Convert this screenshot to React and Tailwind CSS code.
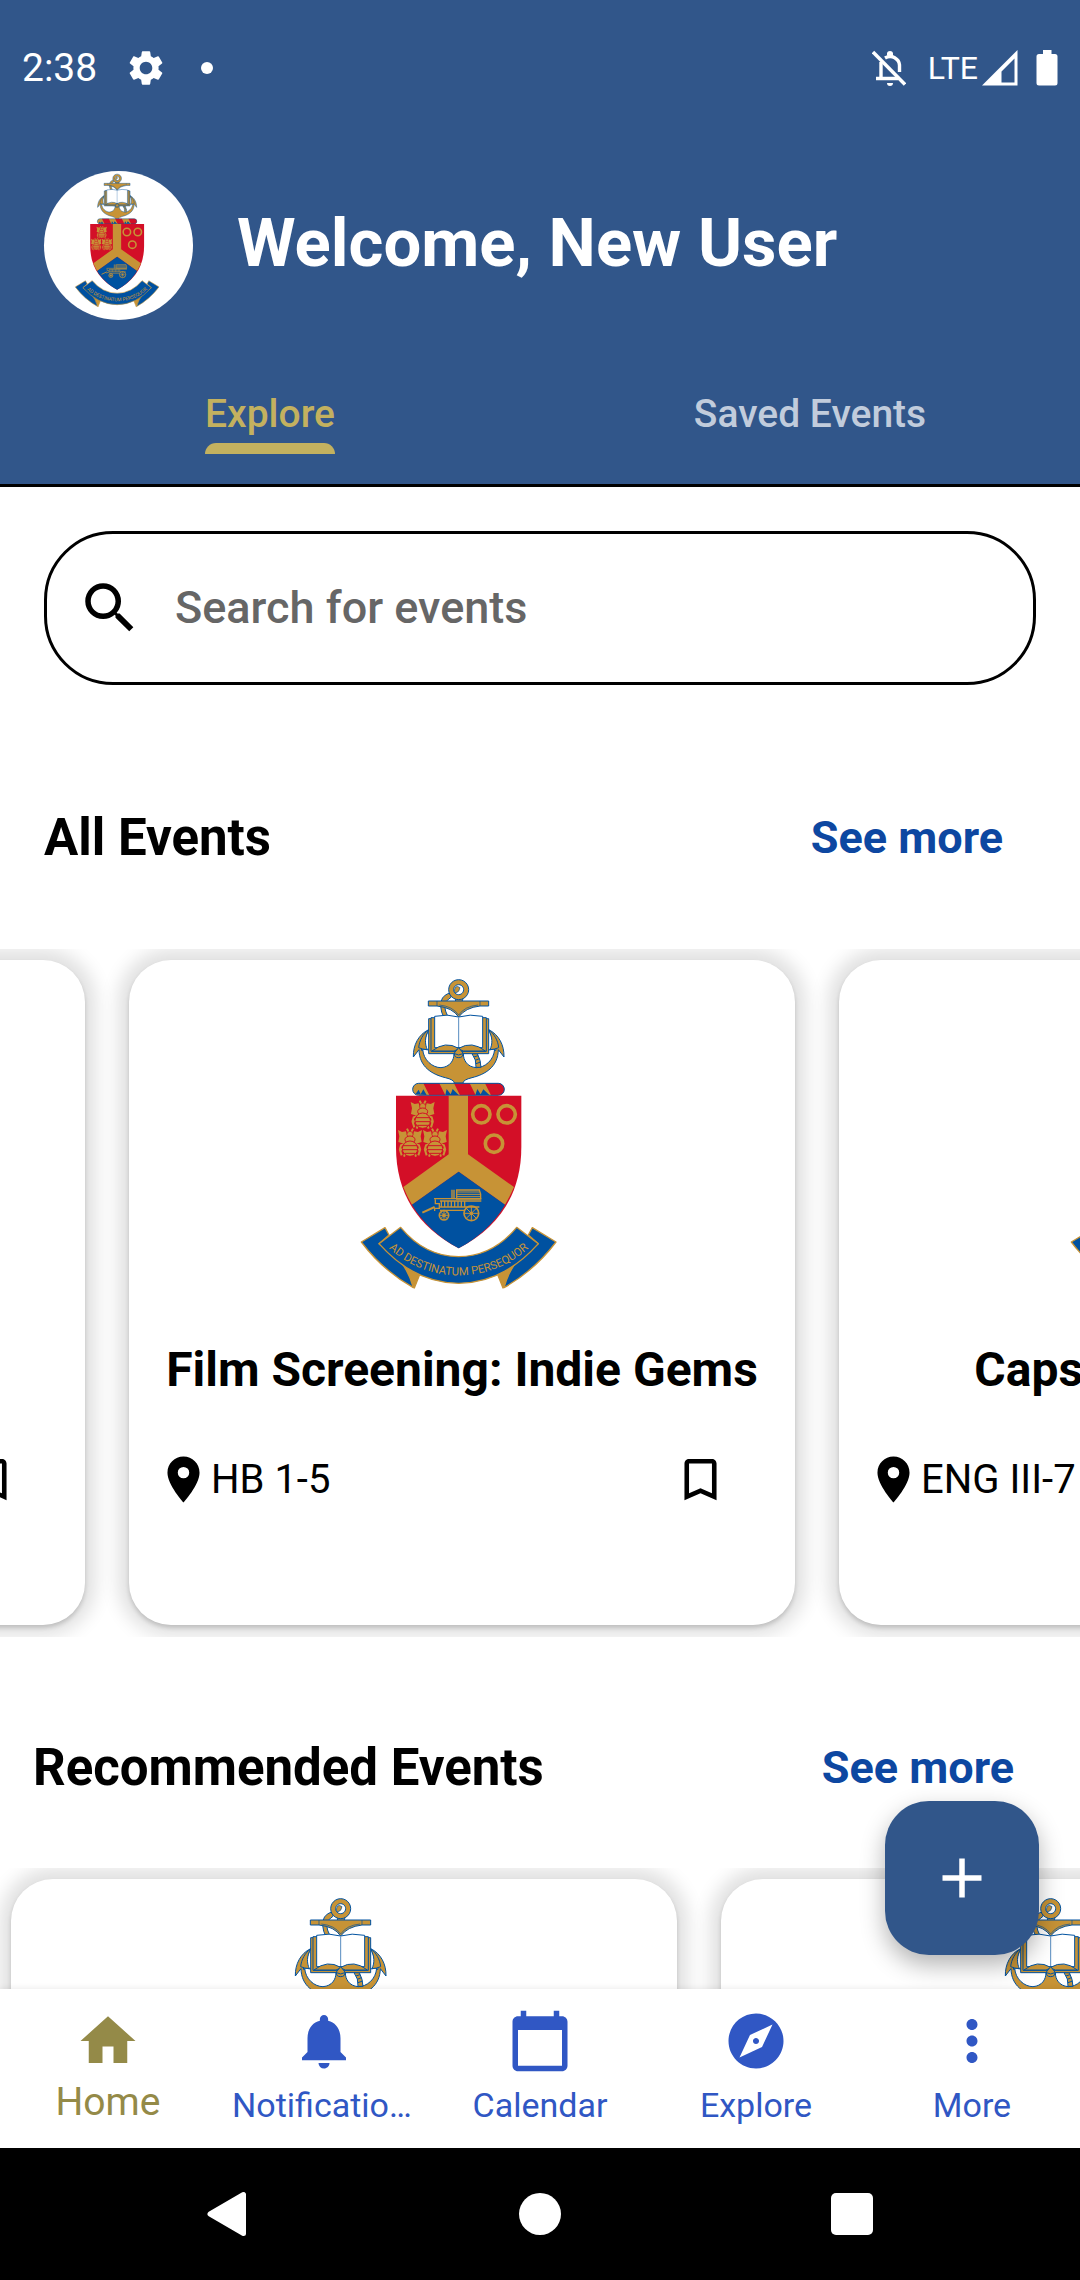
import { useId, useLayoutEffect, useRef } from "react";
import {
  MdSettings,
  MdSearch,
  MdLocationOn,
  MdBookmarkBorder,
  MdHome,
  MdNotifications,
  MdCalendarToday,
  MdExplore,
  MdMoreVert,
} from "react-icons/md";

const GOLD = "#c79336";
const BLUE = "#0051a0";
const RED = "#d30f27";

function Bee({ x, y }) {
  return (
    <g transform={`translate(${x} ${y})`} fill={GOLD}>
      <path d="M-36 -38 L-24 -32 L-12 -34 L-8 -18 L-5 -8 L-16 4 L-35 -2 L-32 -19Z" />
      <path d="M36 -38 L24 -32 L12 -34 L8 -18 L5 -8 L16 4 L35 -2 L32 -19Z" />
      <path
        d="M-3 -30 L-9 -42 M3 -30 L9 -42 M-14 4 L-27 8 L-31 22 M14 4 L27 8 L31 22 M-15 16 L-30 22 L-25 38 M15 16 L30 22 L25 38 M-13 28 L-18 42 M13 28 L18 42"
        stroke={GOLD}
        strokeWidth="6"
        fill="none"
      />
      <circle cy="-25" r="9" stroke={RED} strokeWidth="2" />
      <ellipse cy="-9" rx="15" ry="11" stroke={RED} strokeWidth="3" />
      <ellipse cy="18" rx="23" ry="23" stroke={RED} strokeWidth="3" />
      <path d="M-22 9 H22 M-22 21 H22 M-16 32 H16" stroke={RED} strokeWidth="3" />
    </g>
  );
}

function Wheel({ x, y, r }) {
  const d = r * 0.7;
  return (
    <g transform={`translate(${x} ${y})`} fill="none" stroke={GOLD} strokeWidth="3">
      <circle r={r} strokeWidth="5" />
      <circle r="4" fill={GOLD} />
      <path d={`M0 ${-r}V${r}M${-r} 0H${r}M${-d} ${-d}L${d} ${d}M${-d} ${d}L${d} ${-d}`} />
    </g>
  );
}

function Crest({ className }) {
  const arc = useId();
  return (
    <svg viewBox="50 50 634 942" className={className} role="img" aria-label="University crest">
      <g stroke={BLUE} strokeWidth="3" strokeLinejoin="round" fill={GOLD}>
        <path d="M330 98 Q302 108 304 138 Q305 156 314 172 H327 Q316 150 316 136 Q318 120 336 110Z" />
        <path d="M345 112 Q354 122 343 136 H373 Q364 122 372 112Z" />
        <path
          fillRule="evenodd"
          d="M358 58 a30 30 0 1 0 .1 0Z M358 73 a15 15 0 1 1 -.1 0Z"
        />
        <path d="M354 78 a10 12 0 0 0 -6 20 q12 -2 14 -16Z" strokeWidth="2" />
        <path d="M267 122 H448 V137 H422 Q378 142 358 170 Q340 142 293 137 H267Z" />
        <path d="M293 122 V137 M422 122 V137 M300 134 Q340 138 358 164 Q376 138 416 134" fill="none" strokeWidth="2" />
        <path d="M268 208 C238 222 221 254 222 290 L239 268 C240 320 278 342 318 352 Q344 358 345 368 H371 Q372 358 398 352 C438 342 476 320 477 268 L494 290 C495 254 478 222 448 208 C462 240 468 256 470 270 H246 C248 256 254 240 268 208Z" />
        <path d="M250 266 C252 300 280 322 305 322 C332 320 344 300 344 280 L262 268Z" fill="#fff" />
        <path d="M466 266 C464 300 436 322 411 322 C384 320 372 300 372 280 L454 268Z" fill="#fff" />
        <path d="M268 208 C256 232 256 250 264 268 L250 266 L238 262 C240 240 252 220 268 208Z" />
        <path d="M448 208 C460 232 460 250 452 268 L466 266 L478 262 C476 240 464 220 448 208Z" />
        <path d="M398 280 Q412 298 410 321 H425 Q424 298 414 280Z" />
        <path d="M404 290 L416 286 M408 300 L420 295 M410 310 L424 305" />
        <path d="M268 175 H448 V280 H268Z" />
        <path d="M275 172 H441 V273 H275Z" />
        <path d="M286 168 Q325 160 358 170 Q391 160 430 168 V262 H286Z" fill="#fff" />
        <path d="M278 272 Q318 240 358 264 Q398 240 438 272 H372 L358 266 L344 272Z" />
        <path d="M358 172 V260" strokeWidth="2" fill="none" />
        <path d="M358 262 L345 278 Q344 292 358 292 Q372 292 371 278Z M346 280 Q358 288 370 280" />
      </g>

      <rect x="220" y="369" width="275" height="36" rx="18" fill={GOLD} />
      <path
        d="M252 369 H300 L318 405 H270Z M344 369 H391 L409 405 H362Z M437 369 H477 a18 18 0 0 1 0 36 H455Z"
        fill={RED}
      />
      <path
        d="M228 402 L238 388 L244 402 L252 387 L262 404Z M318 404 L322 386 L334 402 L340 386 L358 404Z M408 404 L414 386 L424 402 L432 387 L450 404Z"
        fill={BLUE}
      />
      <rect x="220" y="369" width="275" height="36" rx="18" fill="none" stroke={BLUE} strokeWidth="3" />

      <path d="M170 406 H546 V560 C546 700 480 800 358 864 C236 800 170 700 170 560Z" fill={RED} />
      <path
        d="M328 406 H386 V582 L524 680 Q512 708 497 733 L358 634 L218 733 Q203 708 192 680 L328 582Z"
        fill={GOLD}
      />
      <path d="M358 634 L218 733 C250 788 300 832 358 864 C416 832 466 788 497 733Z" fill={BLUE} />
      <Bee x={250} y={463} />
      <Bee x={212} y={547} />
      <Bee x={287} y={547} />
      <g fill="none" stroke={GOLD} strokeWidth="11">
        <circle cx="426" cy="462" r="26" />
        <circle cx="502" cy="462" r="26" />
        <circle cx="464" cy="550" r="26" />
      </g>

      <g fill="none" stroke={GOLD} strokeWidth="4">
        <path d="M338 688 V716 M344 688 V716 M352 689 H420 Q426 700 424 716 H352Z" />
        <path d="M352 695 H422 M352 702 H424 M352 709 H424" strokeWidth="3" />
        <path d="M284 715 H426 M302 722 H426 M302 740 H420 M302 750 H376" />
        <path d="M306 722 V740 M316 722 V740 M326 722 V740 M336 722 V740 M346 722 V740 M356 722 V740 M366 722 V740 M376 722 V740" />
        <path d="M288 717 V730 H300 V744 H286 V752" />
        <path d="M249 757 L286 740" strokeWidth="6" />
      </g>
      <Wheel x={396} y={759} r={22} />
      <Wheel x={314} y={765} r={14} />

      <g stroke={GOLD} strokeWidth="4" strokeLinejoin="round">
        <path d="M165 885 L242 940 L225 983 L196 925Z" fill={GOLD} />
        <path d="M551 885 L474 940 L491 983 L520 925Z" fill={GOLD} />
        <path d="M137 802 L66 845 Q130 930 222 982 Q208 930 178 898 L119 850 L149 824Z" fill={BLUE} />
        <path d="M579 802 L650 845 Q586 930 494 982 Q508 930 538 898 L597 850 L567 824Z" fill={BLUE} />
        <path d="M184 801 L119 850 Q224 968 358 969 Q492 968 597 850 L532 801 Q460 888 358 889 Q256 888 184 801Z" fill={BLUE} />
      </g>
      <path id={arc} d="M142 858 Q236 945 358 945 Q480 945 574 858" fill="none" />
      <text fill={GOLD} fontFamily="Roboto, sans-serif" fontSize="34" textAnchor="middle">
        <textPath href={`#${arc}`} startOffset="50%">
          AD DESTINATUM PERSEQUOR
        </textPath>
      </text>
    </svg>
  );
}

function StatusBar() {
  return (
    <div className="flex h-[136px] items-center justify-between px-[22px] text-white">
      <div className="flex items-center">
        <span className="text-[39px] leading-[46px]">2:38</span>
        <MdSettings className="ml-7 size-[42px]" />
        <span className="ml-[34px] size-3 rounded-full bg-white" />
      </div>
      <div className="flex items-center">
        <svg viewBox="0 0 34 36" className="h-9 w-[34px]" fill="none" stroke="currentColor" strokeWidth="3.4">
          <path d="M9 12 V28 M4 28.5 H26 M13 8 C20 4 27 9 27.500 15 V22" />
          <path d="M1 2 L33 34.500" />
          <path d="M15 5 a3 3 0 0 1 6 0Z M14.500 33 H21 a3 3 0 0 1 -6 0Z" fill="currentColor" stroke="none" />
          <circle cx="18" cy="4" r="3" fill="currentColor" stroke="none" />
        </svg>
        <span className="ml-[22px] text-[32px] leading-10">LTE</span>
        <svg viewBox="0 0 36 36" className="ml-1 size-9" fill="currentColor">
          <path fillRule="evenodd" d="M35.500 0 V35.500 H0Z M32.500 8.500 L19.500 21.500 V32.500 H32.500Z" />
        </svg>
        <svg viewBox="0 0 22 36" className="ml-[18px] h-9 w-[22px]" fill="currentColor">
          <path d="M7 0 H15.500 V4 H19 a2.500 2.500 0 0 1 2.500 2.500 V33 a2.500 2.500 0 0 1 -2.500 2.500 H3 A2.500 2.500 0 0 1 .5 33 V6.500 A2.500 2.500 0 0 1 3 4 H7Z" />
        </svg>
      </div>
    </div>
  );
}

function Header() {
  return (
    <header className="shrink-0 border-b-[3px] border-black bg-[#31568a]">
      <StatusBar />
      <div className="flex items-center gap-11 px-11 pt-[35px]">
        <div className="flex size-[149px] items-center justify-center rounded-full bg-white pb-2.5">
          <Crest className="h-[135px]" />
        </div>
        <h1 className="pb-1.5 text-[67px] leading-[80px] font-bold text-white">Welcome, New User</h1>
      </div>
      <div role="tablist" className="grid grid-cols-2 pt-[71px] pb-[30px] text-[39px] leading-[46px] font-medium">
        <button role="tab" aria-selected="true" className="flex flex-col items-center text-[#c3b15f]">
          <span className="flex flex-col gap-1.5">
            Explore
            <span className="h-[11px] rounded-t-[11px] bg-[#c3b15f]" />
          </span>
        </button>
        <button role="tab" aria-selected="false" className="flex flex-col items-center text-[#c1ccdc]">
          Saved Events
        </button>
      </div>
    </header>
  );
}

function EventCard({ title, place }) {
  return (
    <article className="flex w-[666px] shrink-0 flex-col items-center rounded-[42px] bg-white pt-[17px] pb-[118px] shadow-[0_3px_4px_rgba(0,0,0,0.16),0_0_18px_11px_rgba(0,0,0,0.12)]">
      <Crest className="h-[314px]" />
      <h3 className="mt-[51px] text-[48px] leading-[56px] font-bold whitespace-nowrap">{title}</h3>
      <div className="mt-[54px] flex w-full items-center justify-between pr-[67px] pl-[27px]">
        <span className="flex items-center text-[40px] leading-[46px]">
          <MdLocationOn className="size-[55px]" />
          {place}
        </span>
        <button aria-label={`Save ${title}`}>
          <MdBookmarkBorder className="size-[55px]" />
        </button>
      </div>
    </article>
  );
}

function Carousel({ events, scroll, className }) {
  const row = useRef(null);
  useLayoutEffect(() => {
    row.current.scrollLeft = scroll;
  }, [scroll]);
  return (
    <div
      ref={row}
      className={`flex gap-11 overflow-x-auto px-11 pt-[11px] pb-3 [scrollbar-width:none] ${className}`}
    >
      {events.map((event) => (
        <EventCard key={event.title} {...event} />
      ))}
    </div>
  );
}

function SectionHeading({ title, className }) {
  return (
    <div className={`flex items-center justify-between ${className}`}>
      <h2 className="text-[51px] leading-[60px] font-bold">{title}</h2>
      <a href="#events" className="text-[45px] leading-[52px] font-bold text-[#0d47a1]">
        See more
      </a>
    </div>
  );
}

const allEvents = [
  { title: "Career Fair", place: "IT 4-1" },
  { title: "Film Screening: Indie Gems", place: "HB 1-5" },
  { title: "Capstone Projects", place: "ENG III-7" },
];

const recommended = [
  { title: "Film Screening: Indie Gems", place: "HB 1-5" },
  { title: "Capstone Projects", place: "ENG III-7" },
];

const navItems = [
  { label: "Home", Icon: MdHome, active: true },
  { label: "Notifications", Icon: MdNotifications },
  { label: "Calendar", Icon: MdCalendarToday },
  { label: "Explore", Icon: MdExplore },
  { label: "More", Icon: MdMoreVert },
];

function BottomNav() {
  return (
    <nav className="relative grid shrink-0 grid-cols-5 bg-white pt-[19px] pb-[23px] shadow-[0_-1px_6px_rgba(0,0,0,0.08)]">
      {navItems.map(({ label, Icon, active }) => (
        <button
          key={label}
          aria-current={active ? "page" : undefined}
          className={`flex min-w-0 flex-col items-center px-4 ${active ? "text-[#948a48]" : "text-[#3057c4]"}`}
        >
          <Icon className="size-[66px] shrink-0" />
          <span
            className={`w-full truncate text-center ${active ? "mt-[5px] text-[39px] leading-[46px]" : "mt-[11px] text-[34px] leading-10"}`}
          >
            {label}
          </span>
        </button>
      ))}
    </nav>
  );
}

function SystemBar() {
  return (
    <div className="flex h-[132px] shrink-0 items-center justify-between bg-black px-[207px] text-white">
      <button aria-label="Back">
        <svg viewBox="0 0 42 46" className="h-[46px] w-[42px]" fill="currentColor" stroke="currentColor" strokeWidth="5" strokeLinejoin="round">
          <path d="M3 23 L36.500 3.500 V42.500Z" />
        </svg>
      </button>
      <button aria-label="Home screen" className="size-[42px] rounded-full bg-white" />
      <button aria-label="Recent apps" className="size-[42px] rounded-[5px] bg-white" />
    </div>
  );
}

export default function App() {
  return (
    <div className="flex h-screen flex-col overflow-hidden bg-white font-[Roboto,sans-serif] text-black">
      <Header />
      <div className="relative flex min-h-0 flex-1 flex-col">
        <main className="min-h-0 flex-1 overflow-hidden">
          <label className="mx-11 mt-11 flex h-[154px] items-center rounded-[69px] border-[3px] border-black pl-[30px]">
            <MdSearch className="size-[66px] shrink-0" />
            <input
              type="search"
              aria-label="Search for events"
              placeholder="Search for events"
              className="ml-8 min-w-0 flex-1 bg-transparent text-[45px] leading-[52px] font-medium outline-none placeholder:text-[#666666]"
            />
          </label>
          <SectionHeading title="All Events" className="mt-[123px] pr-[77px] pl-11" />
          <Carousel events={allEvents} scroll={625} className="mt-[81px]" />
          <SectionHeading title="Recommended Events" className="mt-[101px] pr-[66px] pl-[33px]" />
          <Carousel events={recommended} scroll={33} className="mt-[70px]" />
        </main>
        <button
          aria-label="Add event"
          className="absolute right-[41px] bottom-[34px] flex size-[154px] items-center justify-center rounded-[44px] bg-[#31568a] text-white shadow-[0_10px_24px_rgba(0,0,0,0.3)]"
        >
          <svg viewBox="0 0 40 40" className="size-10" stroke="currentColor" strokeWidth="5.500">
            <path d="M.5 20 H39.500 M20 .5 V39.500" />
          </svg>
        </button>
      </div>
      <BottomNav />
      <SystemBar />
    </div>
  );
}
